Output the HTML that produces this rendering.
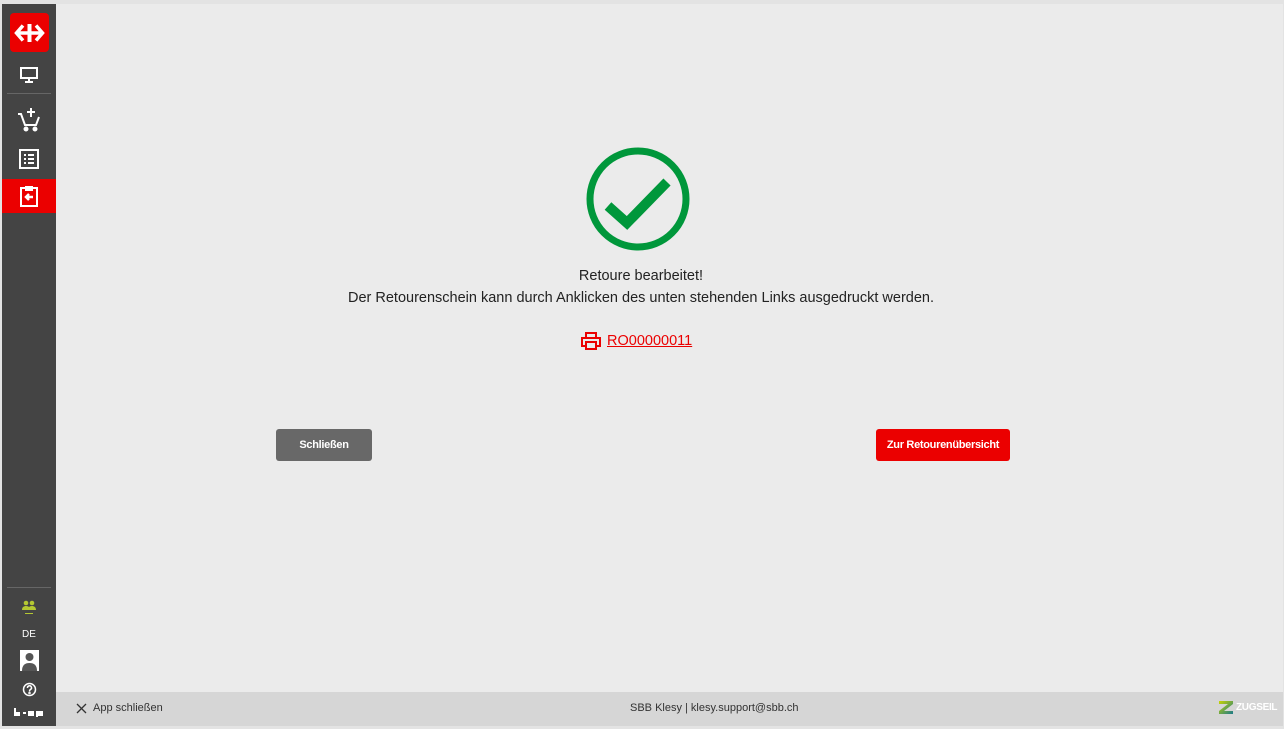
<!DOCTYPE html>
<html><head><meta charset="utf-8"><style>
*{margin:0;padding:0;box-sizing:border-box}
body{width:1284px;height:729px;background:#e3e3e3;font-family:"Liberation Sans",Arial,sans-serif;position:relative;overflow:hidden}
#side{position:absolute;left:2px;top:4px;width:54px;height:722px;background:#444}
#main{position:absolute;left:56px;top:4px;width:1227px;height:688px;background:#ebebeb}
#foot{position:absolute;left:56px;top:692px;width:1227px;height:34px;background:#d6d6d6;font-size:11px;color:#333}
.ic{position:absolute;left:0;width:54px;display:flex;justify-content:center;align-items:center}
.btn{position:absolute;height:32px;border-radius:3px;color:#fff;font-size:11px;font-weight:bold;display:flex;align-items:center;justify-content:center;letter-spacing:-0.3px}
</style></head><body>
<div id="side">
 <div class="ic" style="top:9px;left:8px;width:39px;height:39px;background:#eb0000;border-radius:4px">
  <svg width="31" height="18" viewBox="0 0 31 18" fill="none" stroke="#fff" stroke-width="3.5" stroke-linejoin="miter"><path d="M9 1.5L2.5 9 9 16.5M22 1.5L28.5 9 22 16.5M4 9h23"/><path d="M15.5 0v18" stroke-width="4"/></svg>
 </div>
 <div class="ic" style="top:60px;height:22px"><svg width="20" height="18" viewBox="0 0 20 18" fill="none" stroke="#fff" stroke-width="2"><rect x="2" y="2" width="16" height="10"/><path d="M10 12v4M6 16h8"/></svg></div>
 <div style="position:absolute;left:5px;top:89px;width:44px;height:1px;background:#666"></div>
 <div class="ic" style="top:101px;height:28px"><svg width="24" height="26" viewBox="0 0 24 26" fill="none" stroke="#fff" stroke-width="2"><path d="M1 8h3l4 11h11l3-8"/><path d="M14 2v9M10 6h8"/><circle cx="9" cy="23" r="1.5" fill="#fff"/><circle cx="18" cy="23" r="1.5" fill="#fff"/></svg></div>
 <div class="ic" style="top:144px;height:22px"><svg width="20" height="20" viewBox="0 0 20 20" fill="none" stroke="#fff" stroke-width="2"><rect x="1" y="1" width="18" height="18"/><path d="M5 6h2M9 6h6M5 10h2M9 10h6M5 14h2M9 14h6"/></svg></div>
 <div class="ic" style="top:175px;height:34px;background:#eb0000"><svg width="20" height="22" viewBox="0 0 20 22" fill="none" stroke="#fff" stroke-width="2"><rect x="2" y="3" width="16" height="18"/><path d="M7 2h6v3H7z" fill="#fff"/><path d="M14 12H8M10 9l-3 3 3 3" stroke-width="2.5"/></svg></div>
 <div style="position:absolute;left:5px;top:583px;width:44px;height:1px;background:#666"></div>
 <div class="ic" style="top:594px;height:20px"><svg width="16" height="16" viewBox="0 0 16 16" fill="#b5c832"><circle cx="5" cy="3" r="2.3"/><circle cx="11" cy="3" r="2.3"/><path d="M1 10c0-3 2-4 4-4s3 1 3 1 1-1 3-1 4 1 4 4z"/><path d="M4 13h8v1H4z"/></svg></div>
 <div class="ic" style="top:622px;height:16px;color:#fff;font-size:10px">DE</div>
 <div class="ic" style="top:645px;height:22px"><svg width="19" height="21" viewBox="0 0 19 21"><rect width="19" height="21" fill="#fff"/><circle cx="9.5" cy="7" r="4" fill="#555"/><path d="M2 21c0-6 3-8 7.5-8s7.5 2 7.5 8z" fill="#555"/></svg></div>
 <div class="ic" style="top:677px;height:18px"><svg width="15" height="17" viewBox="0 0 15 17" fill="none" stroke="#fff" stroke-width="1.5"><circle cx="7.5" cy="7.5" r="6"/><path d="M5.5 6a2 2 0 1 1 3 1.5c-1 .5-1 1-1 2"/><circle cx="7.5" cy="11" r=".5"/></svg></div>
 <div class="ic" style="top:701px;height:14px"><svg width="30" height="9" viewBox="0 0 30 9" fill="#fff"><rect x="0" y="0" width="2" height="8"/><rect x="0" y="4" width="6" height="4"/><rect x="9" y="4" width="3" height="2"/><rect x="14" y="3" width="6" height="5"/><rect x="22" y="3" width="7" height="5"/><rect x="22" y="3" width="2" height="6"/></svg></div>
</div>
<div id="main">
 <svg style="position:absolute;left:529px;top:143px" width="106" height="106" viewBox="0 0 106 106"><circle cx="53" cy="52" r="48" fill="none" stroke="#00973b" stroke-width="7"/><path d="M23 59l19 17 40-41" fill="none" stroke="#00973b" stroke-width="10"/></svg>
 <div style="position:absolute;left:0;width:1170px;top:261px;text-align:center;font-size:14.5px;line-height:22px;color:#222">Retoure bearbeitet!<br>Der Retourenschein kann durch Anklicken des unten stehenden Links ausgedruckt werden.</div>
 <div style="position:absolute;left:525px;top:328px;display:flex;align-items:center;color:#eb0000;font-size:14.5px">
  <svg width="20" height="18" viewBox="0 0 20 18" fill="none" stroke="#eb0000" stroke-width="2"><rect x="5" y="1" width="10" height="5"/><path d="M4 14H1V6h18v8h-3"/><rect x="5" y="10" width="10" height="7"/></svg>
  <span style="margin-left:6px;text-decoration:underline">RO00000011</span></div>
 <div class="btn" style="left:220px;top:425px;width:96px;background:#686868">Schließen</div>
 <div class="btn" style="left:820px;top:425px;width:134px;background:#eb0000">Zur Retourenübersicht</div>
</div>
<div id="foot">
 <div style="position:absolute;left:20px;top:10px;display:flex;align-items:center"><svg width="11" height="11" viewBox="0 0 11 11" stroke="#333" stroke-width="1.3"><path d="M1 1l9 9M10 1l-9 9"/></svg><span style="margin-left:6px">App schließen</span></div>
 <div style="position:absolute;left:574px;top:10px">SBB Klesy | klesy.support@sbb.ch</div>
 <div style="position:absolute;left:1162px;top:9px;display:flex;align-items:center"><svg width="16" height="13" viewBox="0 0 16 13"><defs><linearGradient id="g" x1="0" y1="0" x2="1" y2="1"><stop offset="0" stop-color="#c8d400"/><stop offset="1" stop-color="#1a7a8a"/></linearGradient></defs><path d="M1 0h14v3L6 10h9v3H1v-3l9-7H1z" fill="url(#g)"/></svg><span style="margin-left:2px;color:#fff;font-weight:bold;font-size:10px;letter-spacing:-0.3px">ZUGSEIL</span></div>
</div>
</body></html>
